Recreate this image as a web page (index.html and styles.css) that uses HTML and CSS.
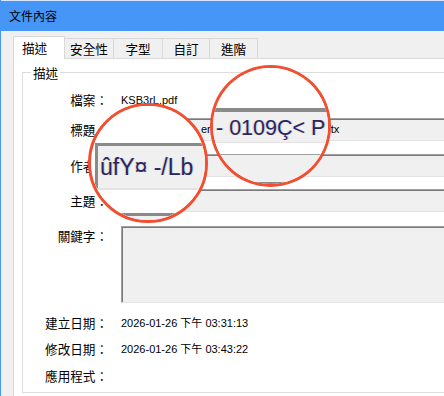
FILE: index.html
```html
<!DOCTYPE html>
<html lang="zh-Hant">
  <head>
    <meta charset="UTF-8" />
    <meta name="viewport" content="width=device-width, initial-scale=1.0" />
    <title>文件內容</title>
    <link rel="stylesheet" href="styles.css">
  </head>

  <body>
    <div class="window">
      <div class="titlebar">文件內容</div>
      <div class="client">
        <div class="tabs">
          <div class="tab active">描述</div>
          <div class="tab w49">安全性</div>
          <div class="tab w49">字型</div>
          <div class="tab w47">自訂</div>
          <div class="tab w48">進階</div>
        </div>
        <div class="page">
          <div class="group">
            <span class="legend">描述</span>
            <div class="row r1">
              <span class="label">檔案：</span>
              <span class="value">KSB3rL.pdf</span>
            </div>
            <div class="row r2">
              <span class="label">標題：</span>
              <div class="field">
                <span class="head">er</span><span class="tail">tx</span>
              </div>
            </div>
            <div class="row r3">
              <span class="label">作者：</span>
              <div class="field"></div>
            </div>
            <div class="row r4">
              <span class="label">主題：</span>
              <div class="field"></div>
            </div>
            <div class="row r5 top">
              <span class="label">關鍵字：</span>
              <div class="keywords"></div>
            </div>
            <div class="row r6">
              <span class="label">建立日期：</span>
              <span class="value">2026-01-26 下午 03:31:13</span>
            </div>
            <div class="row r7">
              <span class="label">修改日期：</span>
              <span class="value">2026-01-26 下午 03:43:22</span>
            </div>
            <div class="row r8">
              <span class="label">應用程式：</span>
              <span class="value"></span>
            </div>
          </div>
        </div>
      </div>

      <!-- magnifier circles over the author / title fields -->
      <div class="lens lens-a">
        <div class="m-white h37"></div>
        <div class="m-field">ûfY¤ -/Lb</div>
        <div class="m-white h23"></div>
        <div class="m-next"></div>
      </div>
      <div class="lens lens-b">
        <div class="m-white h40"></div>
        <div class="m-bar"></div>
        <div class="m-title">- 0109Ç&lt; P</div>
        <div class="m-white h11"></div>
        <div class="m-fill"></div>
        <div class="m-bar"></div>
        <div class="m-rest"></div>
      </div>
    </div>
  </body>
</html>
```

FILE: styles.css
```css
html,
body {
  margin: 0;
  height: 100%;
  overflow: hidden;
  background-color: #f0f0f0;
}

body {
  font-family: "Liberation Sans", "Noto Sans CJK TC", sans-serif;
  font-size: 11px;
  color: #000;
}

.window {
  position: relative;
  overflow: hidden;
  width: 443px;
  height: 396px;
  border-left: 1px solid #4596f7;
  background-color: #f0f0f0;
}

.titlebar {
  height: 30px;
  border-top: 1px solid #d6e6fb;
  background-color: #4596f7;
  padding-left: 8px;
  font-family: "Noto Sans CJK TC", sans-serif;
  font-size: 12px;
  line-height: 30px;
}

.client {
  padding-left: 12px;
}

.tabs {
  display: flex;
  align-items: flex-end;
  height: 27px;
}

.tab {
  box-sizing: border-box;
  height: 20px;
  border-top: 1px solid #d9d9d9;
  border-right: 1px solid #d9d9d9;
  background-color: #f0f0f0;
  text-align: center;
  font-family: "Noto Sans CJK TC", sans-serif;
  font-size: 12.6px;
  line-height: 19px;
}

.tab.active {
  position: relative;
  z-index: 1;
  width: 52px;
  height: 23px;
  margin-bottom: -1px;
  padding-right: 9px;
  border-left: 1px solid #d9d9d9;
  background-color: #fff;
  line-height: 22px;
}

.w49 {
  width: 49px;
}
.w48 {
  width: 48px;
}
.w47 {
  width: 47px;
}

.page {
  height: 338px;
  margin-right: -30px;
  background-color: #fff;
  border-top: 1px solid #d9d9d9;
  border-left: 1px solid #d9d9d9;
}

.group {
  margin: 13px 0 0 8px;
  border: 1px solid #dcdcdc;
  padding-bottom: 6px;
}

.legend {
  display: table;
  margin: -9px 0 0 8px;
  padding: 0 2px;
  background-color: #fff;
  font-family: "Noto Sans CJK TC", sans-serif;
  font-size: 12.6px;
  line-height: 17px;
}

.row {
  display: flex;
  align-items: center;
}
.row.top {
  align-items: flex-start;
}

.r1 { margin-top: 9px; }
.r2 { margin-top: 8px; }
.r3 { margin-top: 13px; }
.r4 { margin-top: 12px; }
.r5 { margin-top: 14px; }
.r6 { margin-top: 10px; }
.r7 { margin-top: 6px; }
.r8 { margin-top: 7px; }

.label {
  flex: none;
  width: 85px;
  margin-right: 13px;
  text-align: right;
  font-family: "Noto Sans CJK TC", sans-serif;
  font-size: 12.6px;
  line-height: 20px;
}

.value {
  line-height: 20px;
}

.field,
.keywords {
  box-sizing: border-box;
  flex: 1;
  background-color: #f0f0f0;
  border-top: 1px solid #a0a0a0;
  border-left: 1px solid #a0a0a0;
  border-bottom: 1px solid #e3e3e3;
  box-shadow: inset 1px 1px 0 #7a7a7a;
}

.field {
  height: 23px;
  line-height: 21px;
}

.keywords {
  height: 77px;
}

.field .head {
  margin-left: 79px;
}
.field .tail {
  margin-left: 120px;
}

/* magnifier */
.lens {
  position: absolute;
  box-sizing: border-box;
  overflow: hidden;
  border: 3px solid #f24e30;
  border-radius: 50%;
  background-color: #fff;
  font-size: 23px;
  color: #2a2463;
  text-shadow: -1px 0 rgba(230, 150, 40, 0.25), 1px 0 rgba(40, 140, 230, 0.25);
}

.lens-a {
  left: 87px;
  top: 103px;
  width: 120px;
  height: 120px;
}

.lens-b {
  left: 209px;
  top: 65px;
  width: 121px;
  height: 122px;
}

.m-white {
  background-color: #fff;
}
.h37 { height: 37px; }
.h23 { height: 23px; }
.h40 { height: 40px; }
.h11 { height: 11px; }

.m-field {
  height: 42px;
  margin-left: 4px;
  padding-left: 2px;
  border-top: 3px solid #8a8a8a;
  border-left: 3px solid #8a8a8a;
  border-bottom: 2px solid #e3e3e3;
  background-color: #f0f0f0;
  line-height: 42px;
  white-space: nowrap;
}

.m-next {
  height: 10px;
  margin-left: 4px;
  border-top: 3px solid #8a8a8a;
  border-left: 3px solid #8a8a8a;
  background-color: #f0f0f0;
}

.m-bar {
  height: 4px;
  background-color: #8a8a8a;
}

.m-title {
  height: 27px;
  padding: 3px 0 0 3px;
  border-bottom: 1px solid #e3e3e3;
  background-color: #f0f0f0;
  font-size: 21.5px;
  line-height: 27px;
  white-space: nowrap;
}

.m-fill {
  height: 27px;
  border-top: 1px solid #a0a0a0;
  background-color: #f0f0f0;
}

.m-rest {
  height: 20px;
  background-color: #f0f0f0;
}
```
